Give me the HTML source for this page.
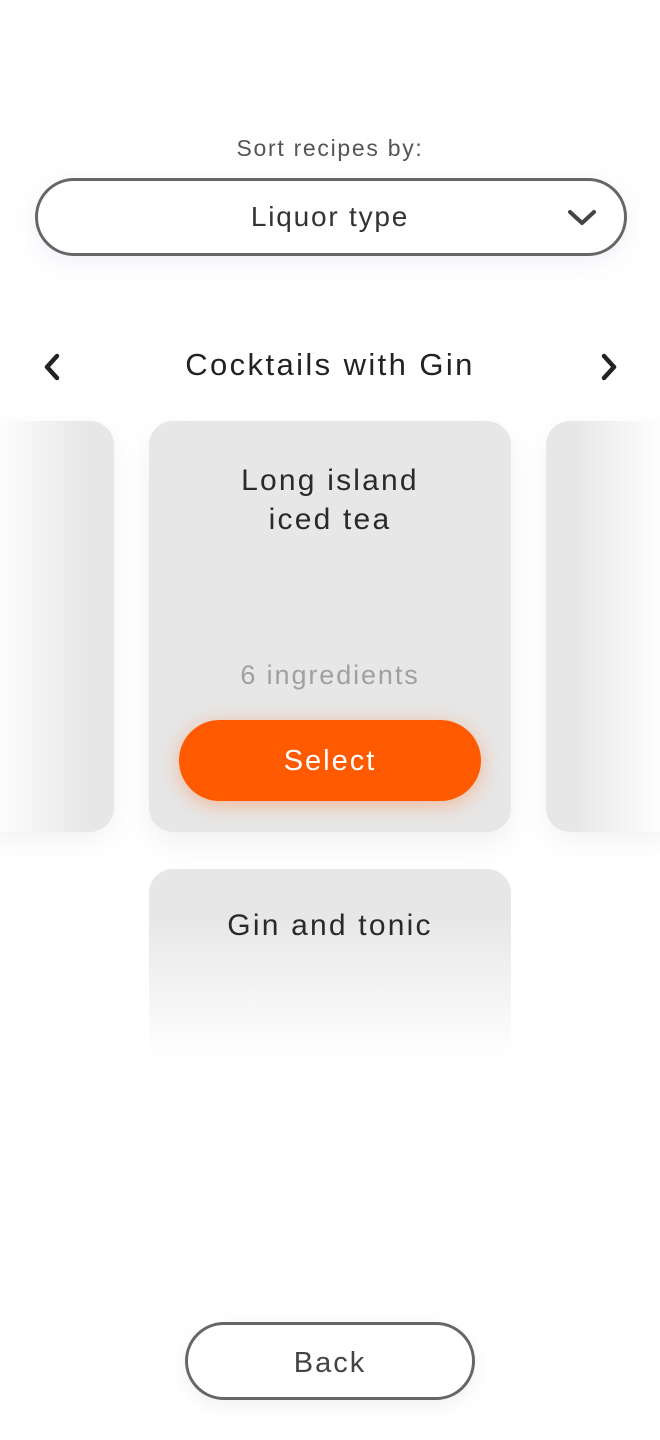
<!DOCTYPE html>
<html><head><meta charset="utf-8"><style>
*{margin:0;padding:0;box-sizing:border-box}
body{width:660px;height:1440px;background:#fff;position:relative;overflow:hidden;font-family:"Liberation Sans",sans-serif;color:#333}
.a{position:absolute}
.t{text-align:center}
</style></head><body>
<div class="a t" style="left:0;width:660px;top:135px;font-size:23px;color:#555;letter-spacing:1.7px">Sort recipes by:</div>
<div class="a" style="left:35px;top:178px;width:592px;height:78px;border:3px solid #666;border-radius:40px;box-shadow:0 6px 24px rgba(120,140,200,0.12)"></div>
<div class="a t" style="left:0;width:660px;top:201px;font-size:28px;color:#333;letter-spacing:1.8px">Liquor type</div>
<svg class="a" style="left:566px;top:208px" width="32" height="20"><path d="M4 4 L16 15 L28 4" fill="none" stroke="#444" stroke-width="4" stroke-linecap="round" stroke-linejoin="round"/></svg>
<svg class="a" style="left:40px;top:352px" width="24" height="30"><path d="M17 4 L7 15 L17 26" fill="none" stroke="#222" stroke-width="4.5" stroke-linecap="round" stroke-linejoin="round"/></svg>
<svg class="a" style="left:597px;top:352px" width="24" height="30"><path d="M7 4 L17 15 L7 26" fill="none" stroke="#222" stroke-width="4.5" stroke-linecap="round" stroke-linejoin="round"/></svg>
<div class="a t" style="left:0;width:660px;top:347px;font-size:31px;color:#222;letter-spacing:2.4px">Cocktails with Gin</div>
<div class="a" style="left:-20px;top:421px;width:134px;height:411px;border-radius:24px;background:linear-gradient(to right,#fff 10%,#e7e7e7 80%);box-shadow:0 10px 30px rgba(0,0,0,0.05)"></div>
<div class="a" style="left:546px;top:421px;width:134px;height:411px;border-radius:24px;background:linear-gradient(to left,#fff 10%,#e7e7e7 80%);box-shadow:0 10px 30px rgba(0,0,0,0.05)"></div>
<div class="a" style="left:149px;top:421px;width:362px;height:411px;border-radius:24px;background:#e7e7e7;box-shadow:0 12px 30px rgba(0,0,0,0.06)"></div>
<div class="a t" style="left:149px;width:362px;top:461px;font-size:30px;line-height:39px;color:#2a2a2a;letter-spacing:2.2px">Long island<br>iced tea</div>
<div class="a t" style="left:149px;width:362px;top:660px;font-size:27px;color:#a0a0a0;letter-spacing:1.9px">6 ingredients</div>
<div class="a t" style="left:179px;top:720px;width:302px;height:81px;border-radius:41px;background:#ff5a00;color:#fff;font-size:29px;line-height:83px;letter-spacing:2px;box-shadow:0 4px 20px rgba(255,110,30,0.4)">Select</div>
<div class="a" style="left:149px;top:869px;width:362px;height:190px;border-radius:24px 24px 0 0;background:linear-gradient(to bottom,#e7e7e7 25%,#fff 100%)"></div>
<div class="a t" style="left:149px;width:362px;top:909px;font-size:30px;color:#2a2a2a;letter-spacing:2.2px">Gin and tonic</div>
<div class="a t" style="left:185px;top:1322px;width:290px;height:78px;border:3px solid #666;border-radius:40px;font-size:29px;line-height:76px;color:#444;letter-spacing:2px;box-shadow:0 6px 20px rgba(0,0,0,0.06)">Back</div>
</body></html>
